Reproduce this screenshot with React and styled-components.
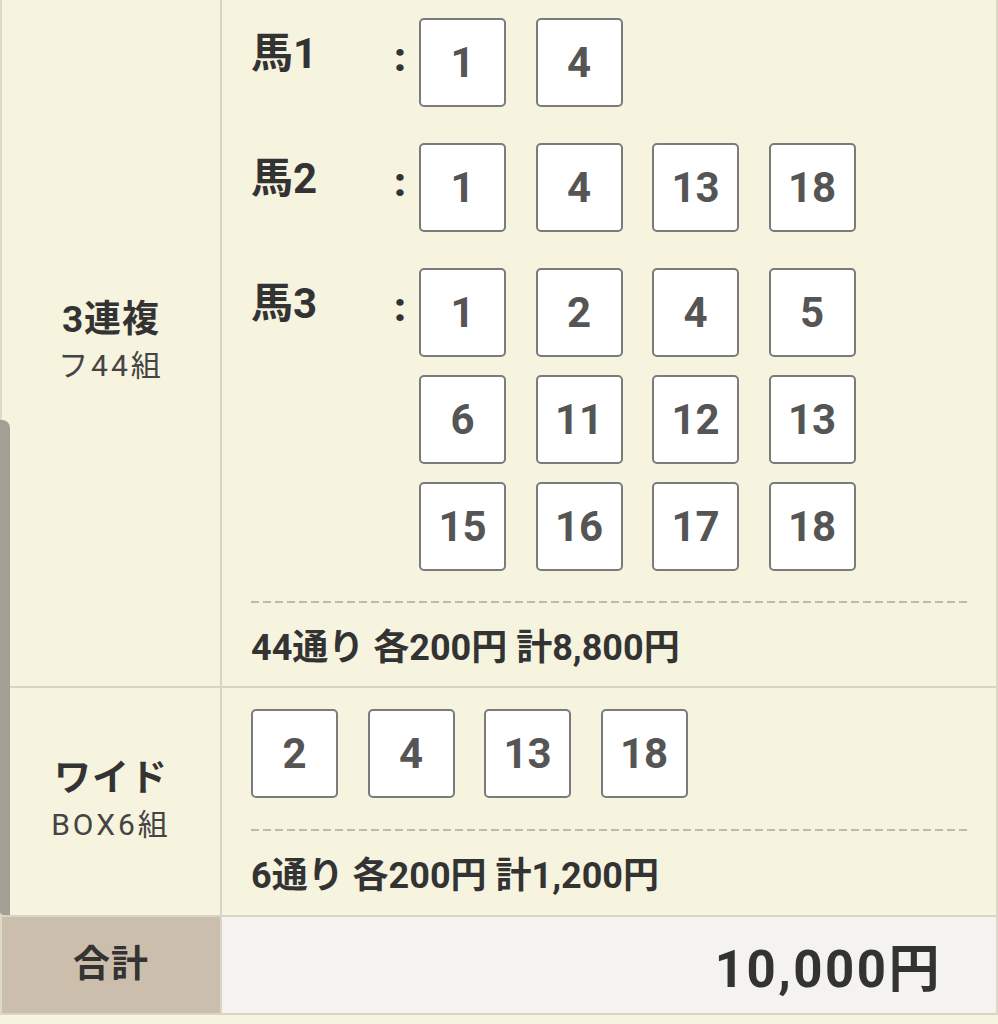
import styled, { createGlobalStyle } from "styled-components";

const GlobalStyle = createGlobalStyle`
  html, body {
    margin: 0;
    padding: 0;
    background: #f6f3df;
  }
  body {
    font-family: Roboto, "Noto Sans CJK JP", sans-serif;
    color: #333;
  }
`

const Wrap = styled.div`
  position: relative;
  width: 998px;
  min-height: 1024px;
  background: #f6f3df;
`

const Table = styled.div`
  width: 994px;
  border-left: 2px solid #dcd9cb;
  border-right: 2px solid #dcd9cb;
`

const Row = styled.div`
  display: grid;
  grid-template-columns: 220px 1fr;
  border-bottom: 2px solid #d8d5c7;
`

const KindCell = styled.div`
  display: flex;
  flex-direction: column;
  align-items: center;
  justify-content: center;
  border-right: 2px solid #d8d5c7;
  background: ${(p) => (p.$total ? "#cbbeac" : "transparent")};
`

const KindName = styled.div`
  font-size: 37px;
  font-weight: 700;
  line-height: 46px;
  letter-spacing: 1px;
  color: #333;
`

const KindSub = styled.div`
  font-size: 30px;
  line-height: 46px;
  letter-spacing: 3px;
  color: #444;
`

const BetCell = styled.div`
  padding: ${(p) => p.$top}px 27px ${(p) => p.$bottom}px 29px;
`

const Groups = styled.div`
  display: flex;
  flex-direction: column;
  gap: 36px;
`

const Group = styled.div`
  display: flex;
  align-items: flex-start;
`

const Horse = styled.div`
  width: 143px;
  font-size: 42px;
  font-weight: 700;
  line-height: 72px;
  color: #333;
`

const Colon = styled.div`
  width: 25px;
  font-size: 40px;
  font-weight: 900;
  line-height: 80px;
  color: #333;
`

const Boxes = styled.div`
  display: grid;
  grid-template-columns: repeat(4, 87px);
  column-gap: 29.5px;
  row-gap: 18px;
`

const NumBox = styled.div`
  box-sizing: border-box;
  width: 87px;
  height: 89px;
  display: flex;
  align-items: center;
  justify-content: center;
  background: #fff;
  border: 2px solid #7b7b7b;
  border-radius: 5px;
  font-size: 42px;
  font-weight: 700;
  color: #555;
`

const Dashed = styled.div`
  height: 2px;
  margin-top: ${(p) => p.$gap}px;
  background-image: repeating-linear-gradient(
    to right,
    #bdbab0 0 8px,
    transparent 8px 12px
  );
`

const Summary = styled.div`
  margin-top: 25px;
  font-size: 36px;
  font-weight: 700;
  line-height: 40px;
  color: #333;
`

const TotalValue = styled.div`
  display: flex;
  align-items: center;
  justify-content: flex-end;
  height: 96px;
  padding-right: 54px;
  background: #f4f3ef;
  font-size: 51px;
  font-weight: 700;
  letter-spacing: 2.5px;
  color: #333;
`

const ScrollThumb = styled.div`
  position: absolute;
  left: 0;
  top: 420px;
  width: 10px;
  height: 495px;
  background: #a29f95;
  border-radius: 0 8px 0 4px;
`

const sanrenpuku = [
  { horse: "馬1", nums: [1, 4] },
  { horse: "馬2", nums: [1, 4, 13, 18] },
  { horse: "馬3", nums: [1, 2, 4, 5, 6, 11, 12, 13, 15, 16, 17, 18] },
];

const wide = [2, 4, 13, 18];

export default function App() {
  return (
    <Wrap>
      <GlobalStyle />
      <Table>
        <Row>
          <KindCell>
            <KindName>3連複</KindName>
            <KindSub>フ44組</KindSub>
          </KindCell>
          <BetCell $top={18} $bottom={18}>
            <Groups>
              {sanrenpuku.map((g) => (
                <Group key={g.horse}>
                  <Horse>{g.horse}</Horse>
                  <Colon>:</Colon>
                  <Boxes>
                    {g.nums.map((n) => (
                      <NumBox key={n}>{n}</NumBox>
                    ))}
                  </Boxes>
                </Group>
              ))}
            </Groups>
            <Dashed $gap={30} />
            <Summary>44通り 各200円 計8,800円</Summary>
          </BetCell>
        </Row>
        <Row>
          <KindCell>
            <KindName>ワイド</KindName>
            <KindSub>BOX6組</KindSub>
          </KindCell>
          <BetCell $top={21} $bottom={19}>
            <Boxes>
              {wide.map((n) => (
                <NumBox key={n}>{n}</NumBox>
              ))}
            </Boxes>
            <Dashed $gap={31} />
            <Summary>6通り 各200円 計1,200円</Summary>
          </BetCell>
        </Row>
        <Row>
          <KindCell $total>
            <KindName>合計</KindName>
          </KindCell>
          <TotalValue>10,000円</TotalValue>
        </Row>
      </Table>
      <ScrollThumb />
    </Wrap>
  );
}
